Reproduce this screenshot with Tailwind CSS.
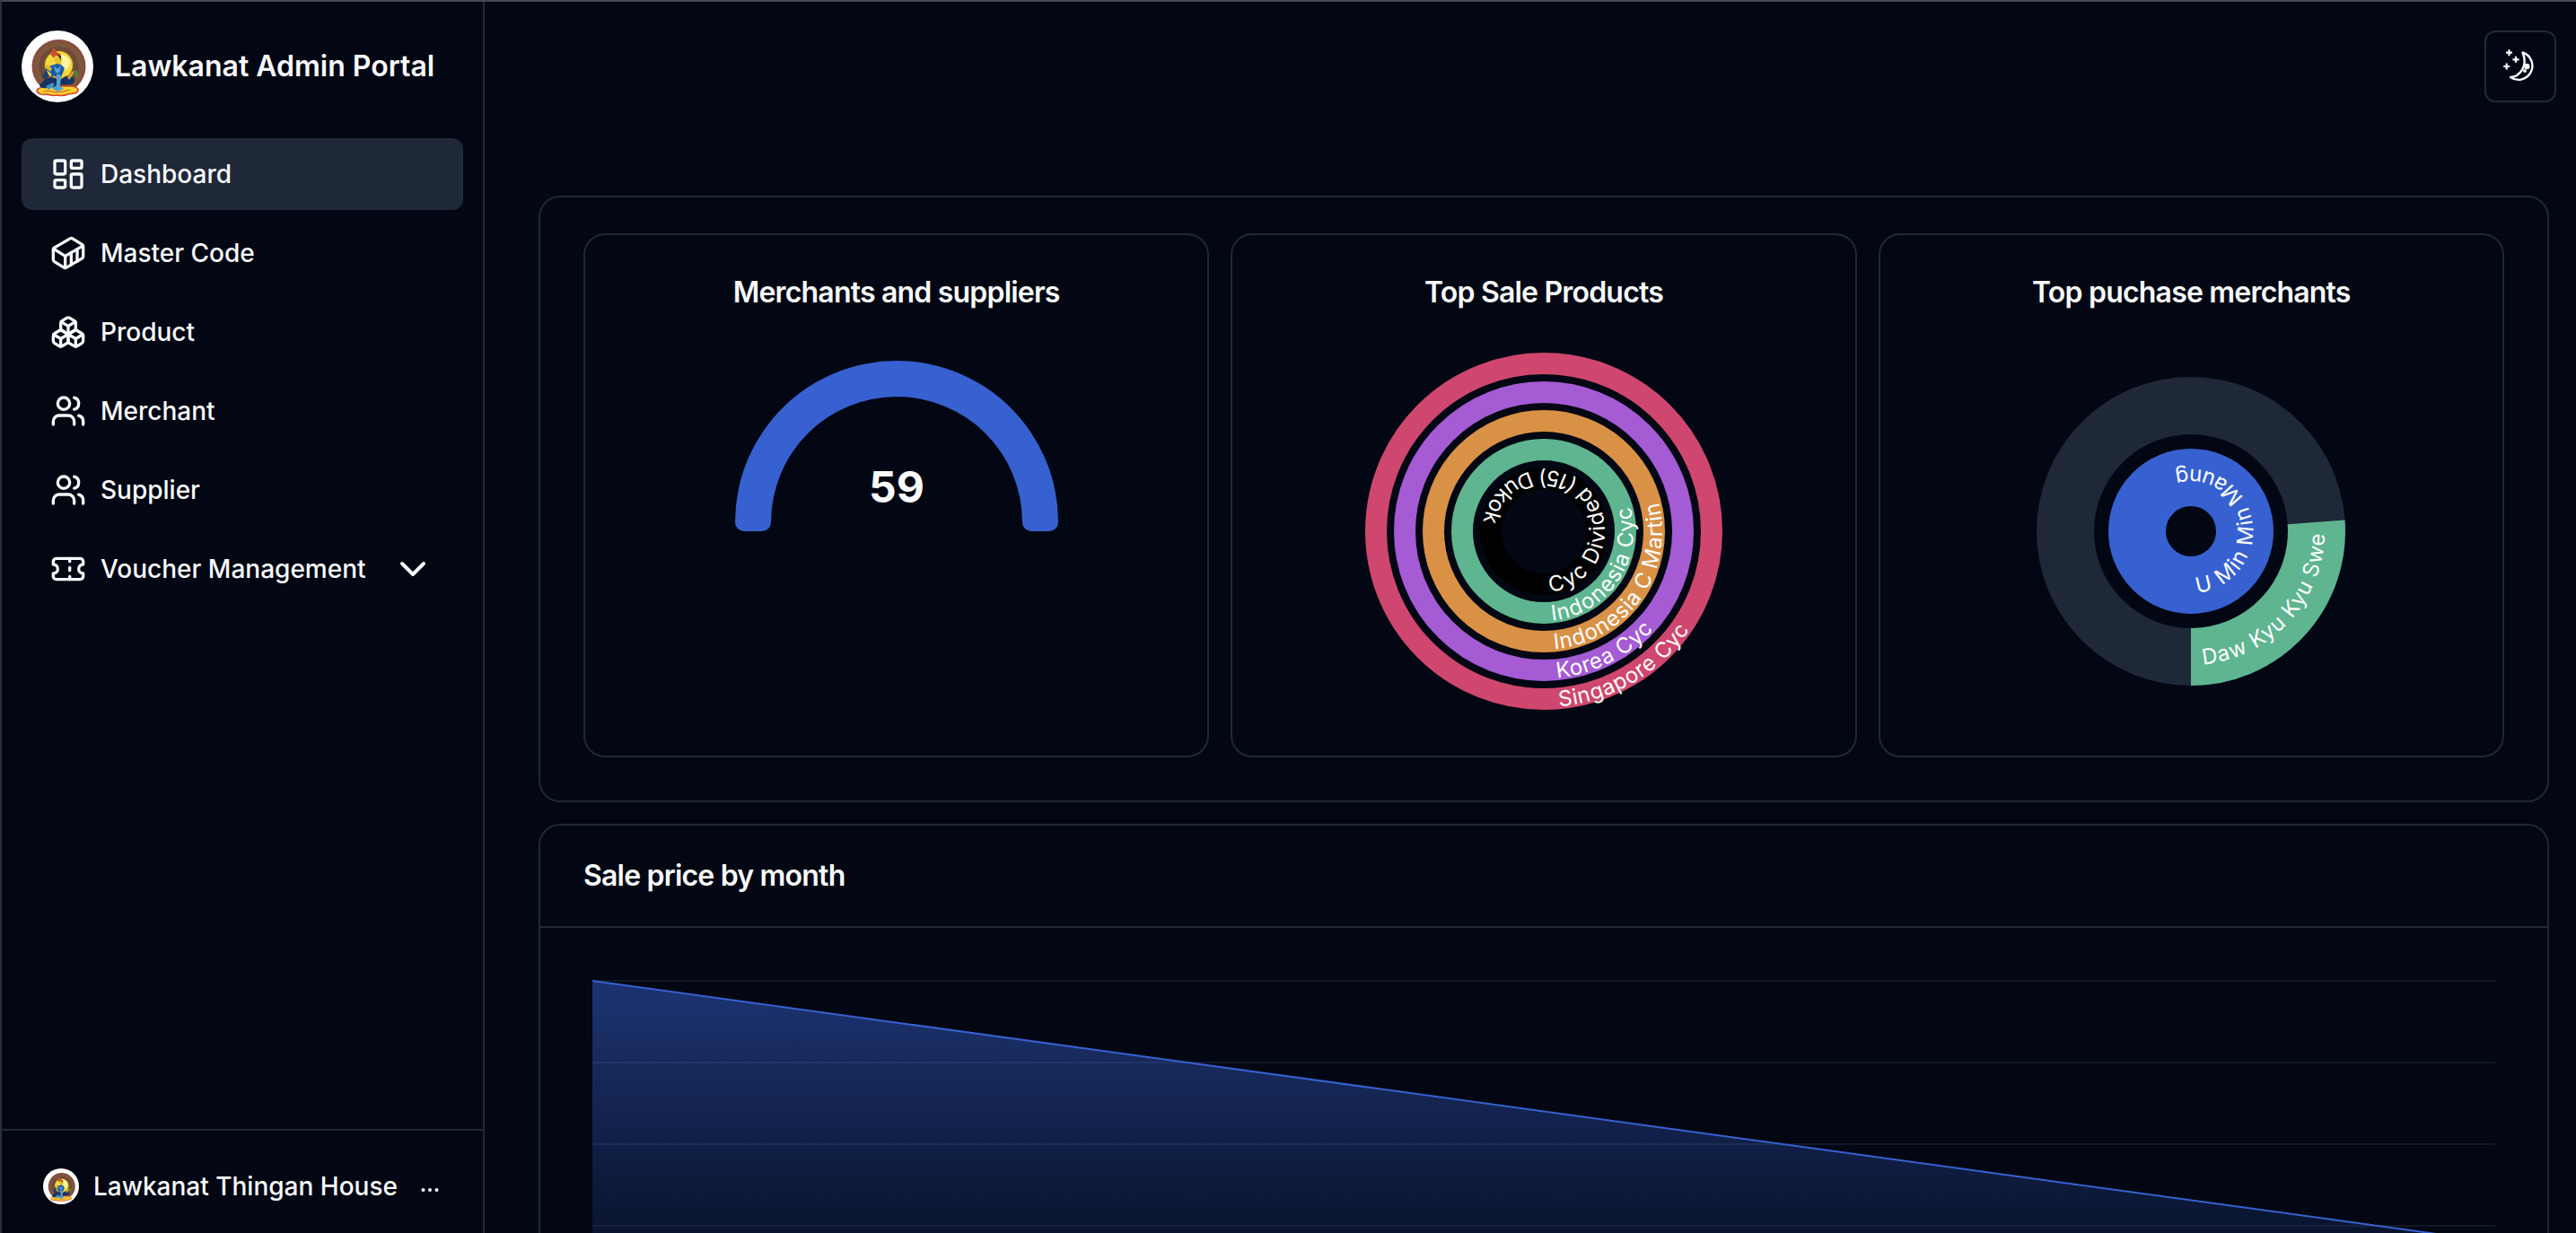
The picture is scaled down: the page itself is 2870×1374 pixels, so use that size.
<!DOCTYPE html>
<html lang="en">
<head>
<meta charset="utf-8">
<title>Lawkanat Admin Portal</title>
<script src="https://cdn.jsdelivr.net/npm/@tailwindcss/browser@4"></script>
</head>
<body class="bg-[#020713] font-[Inter,sans-serif] text-slate-50">
<svg class="hidden" aria-hidden="true">
  <symbol id="users" viewBox="0 0 24 24"><path d="M16 21v-2a4 4 0 0 0-4-4H6a4 4 0 0 0-4 4v2"/><circle cx="9" cy="7" r="4"/><path d="M22 21v-2a4 4 0 0 0-3-3.87"/><path d="M16 3.13a4 4 0 0 1 0 7.75"/></symbol>
  <symbol id="logo" viewBox="0 0 80 80">
    <circle cx="40" cy="40" r="40" fill="#fff"/>
    <circle cx="41.500" cy="40" r="30" fill="#8a4a3f"/>
    <circle cx="41.500" cy="40" r="28" fill="#74503a"/>
    <circle cx="41.500" cy="40" r="25" fill="none" stroke="#8d5f43" stroke-width="5" stroke-dasharray="1 1"/>
    <circle cx="41.500" cy="40" r="20" fill="none" stroke="#5d4030" stroke-width="3" stroke-dasharray="1 2"/>
    <circle cx="41.500" cy="38.500" r="15.500" fill="#f3d93a"/>
    <circle cx="45" cy="36" r="9" fill="#fdf6a0"/>
    <path d="M17 67c1-4 8-4 12-5h26c4 0 9 2 8 5-1 4-8 3-11 4-5 2-8 2-12 1-5 1-9 0-12-1-4 1-10 0-11-4Z" fill="#f6d12f" stroke="#d8402c" stroke-width="1.500"/>
    <path d="M34 22l2-3 3 5 4 2 1 4-9 0-3-4Z" fill="#c9502a"/>
    <path d="M37 28h6l2 4-1 6-5 1-3-5Z" fill="#e8bf2c"/>
    <path d="M40 27l4 1v5l-2-3Z" fill="#3a2a22"/>
    <path d="M33 39l6-2 5 1 4 4-3 8-2 8-9 0-1-10-7-5Z" fill="#1d5ba4"/>
    <path d="M28 38l6 4-2 4-5-4Z" fill="#e3b52e"/>
    <path d="M27 43l3 6-2 6-5-3Z" fill="#1c3f73"/>
    <path d="M35 50l5 2 4-2 2 4-5 3-6-3Z" fill="#e39a2d"/>
    <path d="M36 39l4 4 4-4-2 8-4 0Z" fill="#59a8dc"/>
    <path d="M20 61c5-7 11-10 18-8l4 3 5-4c6-3 13-1 12 5-2 4-9 4-14 3l-5 4-8-1c-5 2-11 2-12-2Z" fill="#17325f"/>
    <path d="M39 48l5 2-1 12 4 3-7 3-6-3 5-4Z" fill="#4fa3d6"/>
    <path d="M27 62l8-4 2 3-7 5Z" fill="#3f8fca"/>
    <path d="M51 52l5-6 3-1-2 5-4 5Z" fill="#d0a234"/>
    <path d="M60 43l3 4-1 6-3-3Z" fill="#4c8a35"/>
    <path d="M24 68l6-1 8 2 8-1 8-2" fill="none" stroke="#d8572c" stroke-width="1"/>
  </symbol>
</svg>
<div class="flex h-screen overflow-hidden border-t-2 border-l-2 border-t-[#45474f] border-l-[#2c3039]">
  <aside class="flex w-[538px] shrink-0 flex-col border-r-2 border-[#1f2838]">
    <div class="flex items-center gap-6 px-[22px] pt-8">
      <svg class="size-20" role="img" aria-label="Lawkanat logo"><use href="#logo"/></svg>
      <h1 class="text-[32px] leading-10 font-semibold">Lawkanat Admin Portal</h1>
    </div>
    <nav class="mt-10 flex flex-col gap-2 px-[22px] text-[28px] leading-10 font-medium">
      <a href="#" class="flex h-20 items-center gap-4 rounded-xl bg-[#1f2838] px-8">
        <svg class="size-10" viewBox="0 0 24 24" fill="none" stroke="currentColor" stroke-width="2" stroke-linecap="round" stroke-linejoin="round"><rect width="7" height="9" x="3" y="3" rx="1"/><rect width="7" height="5" x="14" y="3" rx="1"/><rect width="7" height="9" x="14" y="12" rx="1"/><rect width="7" height="5" x="3" y="16" rx="1"/></svg>
        Dashboard
      </a>
      <a href="#" class="flex h-20 items-center gap-4 rounded-xl px-8">
        <svg class="size-10" viewBox="0 0 24 24" fill="none" stroke="currentColor" stroke-width="2" stroke-linecap="round" stroke-linejoin="round"><path d="M22 7.700c0-.6-.4-1.200-.8-1.500l-6.300-3.900a1.720 1.720 0 0 0-1.700 0l-10.300 6c-.5.2-.9.8-.9 1.400v6.600c0 .5.4 1.200.8 1.500l6.300 3.900a1.720 1.720 0 0 0 1.700 0l10.300-6c.5-.3.9-1 .9-1.500Z"/><path d="M10 21.900V14L2.100 9.100"/><path d="m10 14 11.900-6.900"/><path d="M14 19.800v-8.100"/><path d="M18 17.500V9.400"/></svg>
        Master Code
      </a>
      <a href="#" class="flex h-20 items-center gap-4 rounded-xl px-8">
        <svg class="size-10" viewBox="0 0 24 24" fill="none" stroke="currentColor" stroke-width="2" stroke-linecap="round" stroke-linejoin="round"><path d="M2.970 12.920A2 2 0 0 0 2 14.630v3.240a2 2 0 0 0 .97 1.710l3 1.800a2 2 0 0 0 2.060 0L12 19v-5.500l-5-3-4.030 2.420Z"/><path d="m7 16.500-4.740-2.850"/><path d="m7 16.500 5-3"/><path d="M7 16.500v5.170"/><path d="M12 13.500V19l3.970 2.380a2 2 0 0 0 2.060 0l3-1.800a2 2 0 0 0 .97-1.710v-3.240a2 2 0 0 0-.97-1.710L17 10.500l-5 3Z"/><path d="m17 16.500-5-3"/><path d="m17 16.500 4.740-2.850"/><path d="M17 16.500v5.170"/><path d="M7.970 4.420A2 2 0 0 0 7 6.130v4.370l5 3 5-3V6.130a2 2 0 0 0-.97-1.710l-3-1.800a2 2 0 0 0-2.060 0l-3 1.800Z"/><path d="M12 8 7.260 5.150"/><path d="m12 8 4.740-2.850"/><path d="M12 13.500V8"/></svg>
        Product
      </a>
      <a href="#" class="flex h-20 items-center gap-4 rounded-xl px-8">
        <svg class="size-10" fill="none" stroke="currentColor" stroke-width="2" stroke-linecap="round" stroke-linejoin="round"><use href="#users"/></svg>
        Merchant
      </a>
      <a href="#" class="flex h-20 items-center gap-4 rounded-xl px-8">
        <svg class="size-10" fill="none" stroke="currentColor" stroke-width="2" stroke-linecap="round" stroke-linejoin="round"><use href="#users"/></svg>
        Supplier
      </a>
      <button type="button" aria-expanded="false" class="flex h-20 items-center gap-4 rounded-xl px-8">
        <svg class="size-10" viewBox="0 0 24 24" fill="none" stroke="currentColor" stroke-width="2" stroke-linecap="round" stroke-linejoin="round"><path d="M2 9a3 3 0 0 1 0 6v2a2 2 0 0 0 2 2h16a2 2 0 0 0 2-2v-2a3 3 0 0 1 0-6V7a2 2 0 0 0-2-2H4a2 2 0 0 0-2 2Z"/><path d="M13 5v2"/><path d="M13 17v2"/><path d="M13 11v2"/></svg>
        Voucher Management
        <svg class="ml-auto size-12" viewBox="0 0 24 24" fill="none" stroke="currentColor" stroke-width="2" stroke-linecap="round" stroke-linejoin="round"><path d="m6 9 6 6 6-6"/></svg>
      </button>
    </nav>
    <div class="mt-auto border-t-2 border-[#1f2838] px-[46px] pt-8 pb-[22px]">
      <button type="button" class="flex items-center gap-4 text-[28px] leading-10 font-medium">
        <svg class="my-2.5 size-10" aria-hidden="true"><use href="#logo"/></svg>
        Lawkanat Thingan House
        <svg class="mt-2 ml-2 size-6" viewBox="0 0 24 24" fill="currentColor" aria-label="More"><circle cx="4.500" cy="12" r="2"/><circle cx="12" cy="12" r="2"/><circle cx="19.500" cy="12" r="2"/></svg>
      </button>
    </div>
  </aside>

  <main class="min-w-0 flex-1">
    <header class="flex justify-end px-[22px] pt-8">
      <button type="button" aria-label="Toggle theme" class="flex size-20 items-center justify-center rounded-xl border-2 border-[#1f2838]">
        <svg class="size-10" viewBox="0 0 40 40" fill="none" stroke="currentColor" stroke-width="2.400" stroke-linejoin="round"><path d="M22.500 4.500A15.500 15.500 0 1 1 9 32C19 31.500 29 20 22.500 4.500Z"/><path d="M7.500 1.200v7M4 4.700h7M15 8.800v7M11.500 12.300h7M4.700 16.500v7M1.200 20h7" stroke-width="2.200"/><circle cx="27.300" cy="20" r="2" fill="currentColor"/><circle cx="25" cy="25" r=".8" fill="currentColor"/></svg>
      </button>
    </header>
    <div class="flex flex-col gap-6 pt-[104px] pr-[30px] pl-[60px]">
      <section class="rounded-3xl border-2 border-[#1f2838] px-12 pt-10 pb-12">
        <div class="grid grid-cols-3 gap-6">
          <article class="flex h-[584px] flex-col items-center rounded-3xl border-2 border-[#1f2838] pt-12">
            <h2 class="text-[32px] leading-8 font-semibold tracking-tight">Merchants and suppliers</h2>
            <svg class="mt-[50px] size-[400px]" viewBox="-200 -200 400 400" role="img" aria-label="59 merchants and suppliers">
              <path d="M-180-10A180 180 0 0 1 180-10A10 10 0 0 1 170 0H150A10 10 0 0 1 140-10A140 140 0 0 0-140-10A10 10 0 0 1-150 0H-170A10 10 0 0 1-180-10Z" fill="#3761d1"/>
              <text x="0" y="-32" text-anchor="middle" class="fill-slate-50 text-5xl font-bold">59</text>
            </svg>
          </article>
          <article class="flex h-[584px] flex-col items-center rounded-3xl border-2 border-[#1f2838] pt-12">
            <h2 class="text-[32px] leading-8 font-semibold tracking-tight">Top Sale Products</h2>
            <svg class="mt-[50px] size-[400px]" viewBox="-200 -200 400 400" role="img" aria-label="Top sale products">
              <g fill="none" stroke-width="24">
                <circle r="59" stroke="#000"/>
                <circle r="91" stroke="#5eb58f"/>
                <circle r="123" stroke="#d99146"/>
                <circle r="155" stroke="#a45bd4"/>
                <circle r="187" stroke="#cf476e"/>
              </g>
              <defs>
                <path id="r1" d="M5.140 58.780A59 59 0 1 0-5.140 58.780"/>
                <path id="r2" d="M7.930 90.650A91 91 0 1 0-7.930 90.650"/>
                <path id="r3" d="M10.720 122.530A123 123 0 1 0-10.720 122.530"/>
                <path id="r4" d="M13.510 154.410A155 155 0 1 0-13.510 154.410"/>
                <path id="r5" d="M16.300 186.290A187 187 0 1 0-16.300 186.290"/>
              </defs>
              <g class="fill-white text-2xl" dominant-baseline="central">
                <text><textPath href="#r1">Cyc Divided (15) Dukok</textPath></text>
                <text><textPath href="#r2">Indonesia Cyc</textPath></text>
                <text><textPath href="#r3">Indonesia C Martin</textPath></text>
                <text><textPath href="#r4">Korea Cyc</textPath></text>
                <text><textPath href="#r5">Singapore Cyc</textPath></text>
              </g>
            </svg>
          </article>
          <article class="flex h-[584px] flex-col items-center rounded-3xl border-2 border-[#1f2838] pt-12">
            <h2 class="text-[32px] leading-8 font-semibold tracking-tight">Top puchase merchants</h2>
            <svg class="mt-[50px] size-[400px]" viewBox="-200 -200 400 400" role="img" aria-label="Top purchase merchants">
              <g fill="none" stroke-width="64">
                <circle r="60" stroke="#3761d1"/>
                <circle r="140" stroke="#1f2838"/>
                <path d="M0 140A140 140 0 0 0 139.600-10.200" stroke="#5eb58f"/>
              </g>
              <defs>
                <path id="m1" d="M5.230 59.770A60 60 0 1 0-5.230 59.770"/>
                <path id="m2" d="M12.200 139.470A140 140 0 1 0-12.200 139.470"/>
              </defs>
              <g class="fill-white text-2xl" dominant-baseline="central">
                <text><textPath href="#m1">U Min Min Maung</textPath></text>
                <text><textPath href="#m2">Daw Kyu Kyu Swe</textPath></text>
              </g>
            </svg>
          </article>
        </div>
      </section>
      <section class="rounded-3xl border-2 border-[#1f2838]">
        <div class="border-b-2 border-[#1f2838] px-12 py-10">
          <h2 class="text-[32px] leading-8 font-semibold tracking-tight">Sale price by month</h2>
        </div>
        <div class="px-[58px] pt-[58px] pb-12">
          <svg class="h-[366px] w-full" viewBox="0 0 2120 366" preserveAspectRatio="none" role="img" aria-label="Sale price by month">
            <defs>
              <linearGradient id="fade" x1="0" y1="0" x2="0" y2="1"><stop offset="5%" stop-color="#3761d1" stop-opacity=".8"/><stop offset="95%" stop-color="#3761d1" stop-opacity=".1"/></linearGradient>
            </defs>
            <path d="M0 1H2120M0 92H2120M0 183H2120M0 274H2120M0 365H2120" stroke="#1f2838" stroke-opacity=".5" stroke-width="2"/>
            <path d="M0 1L2120 292V365H0Z" fill="url(#fade)" fill-opacity=".6"/>
            <path d="M0 1L2120 292" stroke="#3761d1" stroke-width="2"/>
          </svg>
        </div>
      </section>
    </div>
  </main>
</div>
</body>
</html>
